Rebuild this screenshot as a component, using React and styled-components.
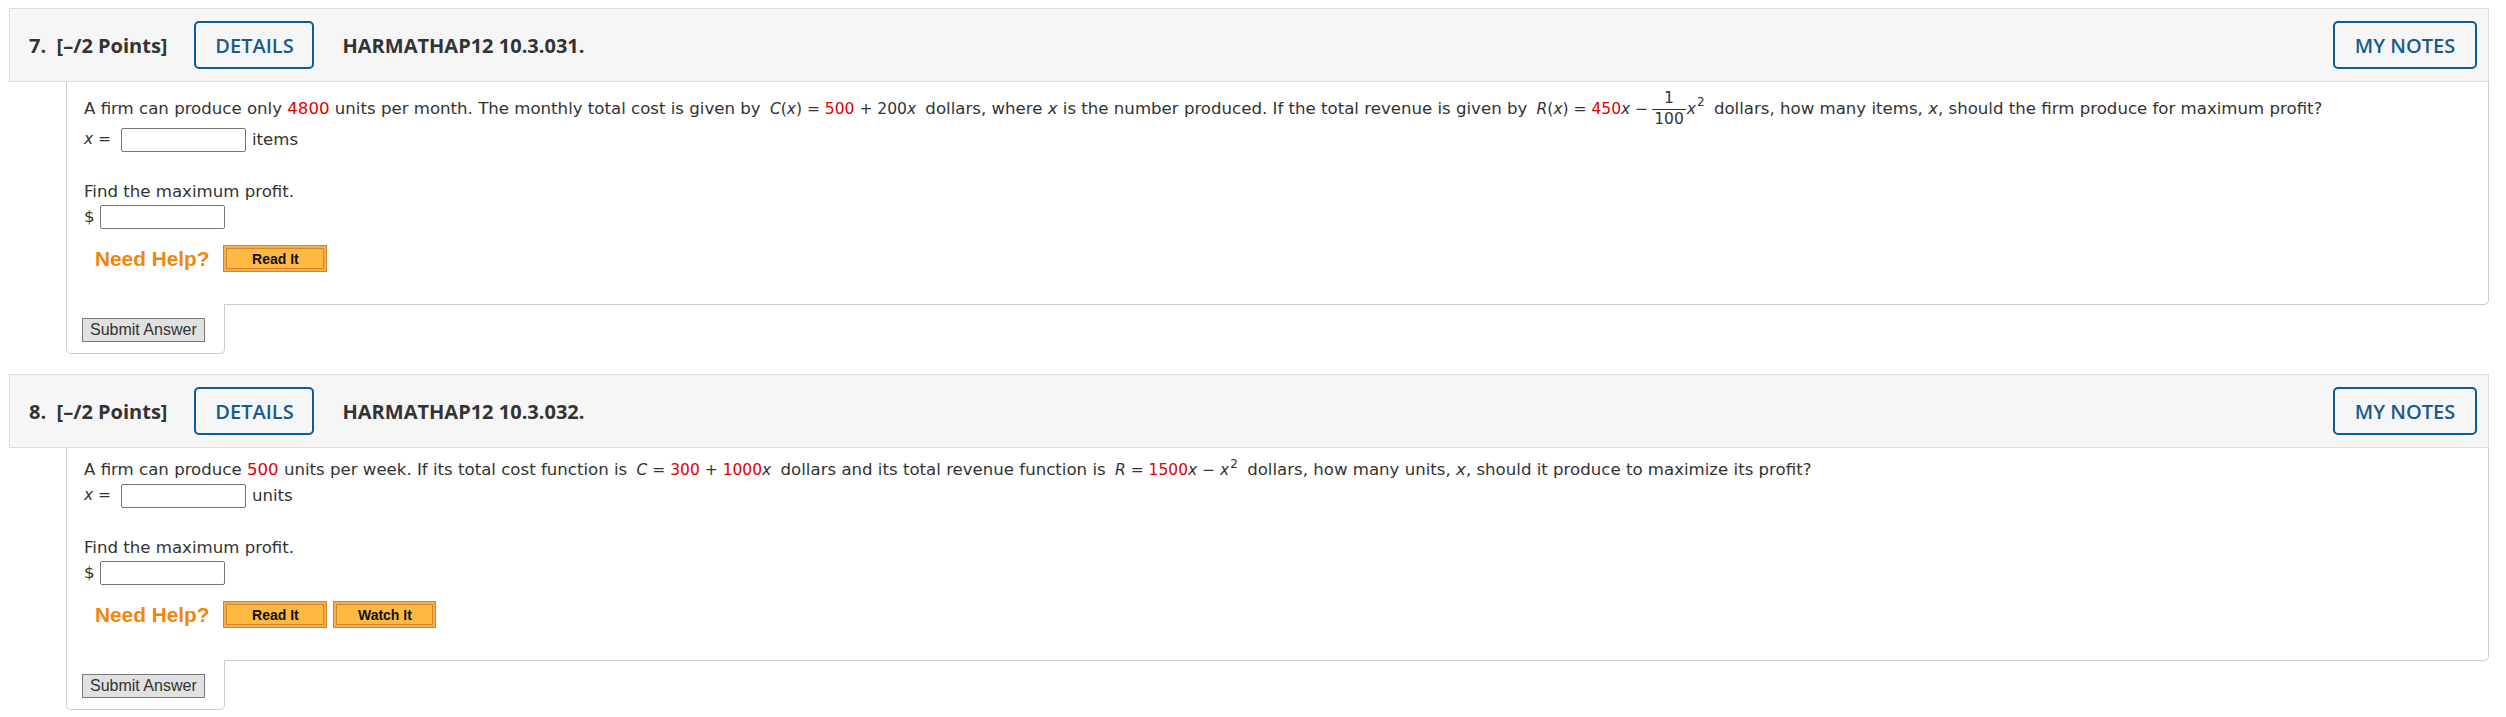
import React from 'react';
import styled, { createGlobalStyle } from 'styled-components';

const GlobalStyle = createGlobalStyle`
  body {
    margin: 0;
    background: #fff;
  }
`;

const Page = styled.div`
  padding: 8px 17px 0 9px;
  font-family: "DejaVu Sans", Verdana, sans-serif;
  color: #333;
`;

const Question = styled.section`
  margin-bottom: 20px;
`;

const Header = styled.div`
  display: flex;
  align-items: center;
  height: ${({ $h }) => $h}px;
  box-sizing: border-box;
  padding: 0 11px 0 19px;
  background: #f6f6f6;
  border: 1px solid #ddd;
  font-family: "Open Sans", sans-serif;
  font-size: 20px;
  color: #333;
`;

const Points = styled.span`
  font-weight: 700;
  white-space: pre;
  margin-right: 27px;
`;

const OutlineButton = styled.button`
  height: 48px;
  width: ${({ $w }) => $w}px;
  padding: 0;
  background: transparent;
  border: 2px solid #0b5c98;
  border-radius: 5px;
  font-family: "Open Sans", sans-serif;
  font-size: 20px;
  font-weight: 600;
  color: #1a5a8c;
  cursor: pointer;
  ${({ $right }) => $right && 'margin-left: auto;'}
`;

const Code = styled.span`
  font-weight: 700;
  margin-left: 28px;
`;

const Body = styled.div`
  margin-left: 57px;
`;

const Content = styled.div`
  border: 1px solid #ccc;
  border-top: none;
  border-radius: 0 0 5px 0;
  padding: 9px 17px 32px;
  font-size: 16.6px;
  line-height: 25px;
`;

const Prompt = styled.p`
  margin: 0;
`;

const MathExpr = styled.span`
  font-size: 15.5px;
  margin: 0 4px;
  white-space: nowrap;
`;

const Var = styled.i`
  font-style: italic;
`;

const Red = styled.span`
  color: #e00000;
`;

const Frac = styled.span`
  display: inline-flex;
  flex-direction: column;
  align-items: center;
  vertical-align: middle;
  line-height: 1;
  margin: 0 1px 0 4px;
`;

const Num = styled.span`
  padding: 0 2px 2px;
`;

const Den = styled.span`
  border-top: 1px solid #333;
  padding: 2px 2px 0;
`;

const Sup = styled.sup`
  font-size: 12px;
  line-height: 0;
  vertical-align: 0.6em;
  margin-left: 1px;
`;

const AnswerRow = styled.div`
  display: flex;
  align-items: center;
  gap: ${({ $gap }) => $gap}px;
`;

const Label = styled.span`
  font-size: 15.5px;
  white-space: pre;
`;

const Unit = styled.span`
  margin-left: 6px;
`;

const Input = styled.input`
  width: 125px;
  height: 24px;
  box-sizing: border-box;
  margin: 0;
  padding: 0 4px;
  border: 1px solid #767676;
  border-radius: 2px;
  background: #fff;
`;

const Line = styled.div`
  margin-top: ${({ $top }) => $top || 0}px;
`;

const HelpRow = styled.div`
  display: flex;
  align-items: center;
  margin-top: 16px;
  padding-left: 11px;
`;

const NeedHelp = styled.span`
  font-family: "Liberation Sans", Arial, sans-serif;
  font-weight: 700;
  font-size: 20.8px;
  color: #f0860a;
  margin-right: 14px;
`;

const HelpButton = styled.button`
  width: ${({ $w }) => $w}px;
  height: 27px;
  margin-right: 6px;
  padding: 0;
  background: #fdb941;
  border: 1px solid #d9822b;
  box-shadow: inset 0 0 0 2px #f9ae45, inset 0 0 0 3px #d4852f;
  font-family: "Liberation Sans", Arial, sans-serif;
  font-weight: 700;
  font-size: 14px;
  color: #111;
  cursor: pointer;
`;

const SubmitTab = styled.div`
  width: 159px;
  box-sizing: border-box;
  margin-top: -1px;
  padding: 14px 0 11px 15px;
  background: #fff;
  border: 1px solid #ccc;
  border-top: none;
  border-radius: 0 0 5px 5px;
`;

const SubmitButton = styled.button`
  height: 24px;
  padding: 0 7px;
  background: #e1e1e1;
  border: 1px solid #7a7a7a;
  border-radius: 0;
  font-family: "Liberation Sans", Arial, sans-serif;
  font-size: 16px;
  color: #333;
  cursor: pointer;
`;

const questions = [
  {
    num: 7,
    code: 'HARMATHAP12 10.3.031.',
    h: 74,
    unit: 'items',
    prompt: (
      <>
        A firm can produce only <Red>4800</Red> units per month. The monthly total cost is given by{' '}
        <MathExpr>
          <Var>C</Var>(<Var>x</Var>) = <Red>500</Red> + 200<Var>x</Var>
        </MathExpr>{' '}
        dollars, where <Var>x</Var> is the number produced. If the total revenue is given by{' '}
        <MathExpr>
          <Var>R</Var>(<Var>x</Var>) = <Red>450</Red><Var>x</Var> −
          <Frac>
            <Num>1</Num>
            <Den>100</Den>
          </Frac>
          <Var>x</Var><Sup>2</Sup>
        </MathExpr>{' '}
        dollars, how many items, <Var>x</Var>, should the firm produce for maximum profit?
      </>
    ),
    buttons: [{ label: 'Read It', w: 104 }],
  },
  {
    num: 8,
    code: 'HARMATHAP12 10.3.032.',
    h: 74,
    unit: 'units',
    prompt: (
      <>
        A firm can produce <Red>500</Red> units per week. If its total cost function is{' '}
        <MathExpr>
          <Var>C</Var> = <Red>300</Red> + <Red>1000</Red><Var>x</Var>
        </MathExpr>{' '}
        dollars and its total revenue function is{' '}
        <MathExpr>
          <Var>R</Var> = <Red>1500</Red><Var>x</Var> − <Var>x</Var><Sup>2</Sup>
        </MathExpr>{' '}
        dollars, how many units, <Var>x</Var>, should it produce to maximize its profit?
      </>
    ),
    buttons: [
      { label: 'Read It', w: 104 },
      { label: 'Watch It', w: 103 },
    ],
  },
];

const App = () => (
  <Page>
    <GlobalStyle />
    {questions.map((q) => (
      <Question key={q.num}>
        <Header $h={q.h}>
          <Points>{`${q.num}.  [–/2 Points]`}</Points>
          <OutlineButton $w={120}>DETAILS</OutlineButton>
          <Code>{q.code}</Code>
          <OutlineButton $w={144} $right>MY NOTES</OutlineButton>
        </Header>
        <Body>
          <Content>
            <Prompt>{q.prompt}</Prompt>
            <AnswerRow $gap={0}>
              <Label>
                <Var>x</Var>{' =  '}
              </Label>
              <Input />
              <Unit>{q.unit}</Unit>
            </AnswerRow>
            <Line $top={27}>Find the maximum profit.</Line>
            <AnswerRow $gap={5}>
              <span>$</span>
              <Input />
            </AnswerRow>
            <HelpRow>
              <NeedHelp>Need Help?</NeedHelp>
              {q.buttons.map((b) => (
                <HelpButton key={b.label} $w={b.w}>{b.label}</HelpButton>
              ))}
            </HelpRow>
          </Content>
          <SubmitTab>
            <SubmitButton>Submit Answer</SubmitButton>
          </SubmitTab>
        </Body>
      </Question>
    ))}
  </Page>
);

export default App;
